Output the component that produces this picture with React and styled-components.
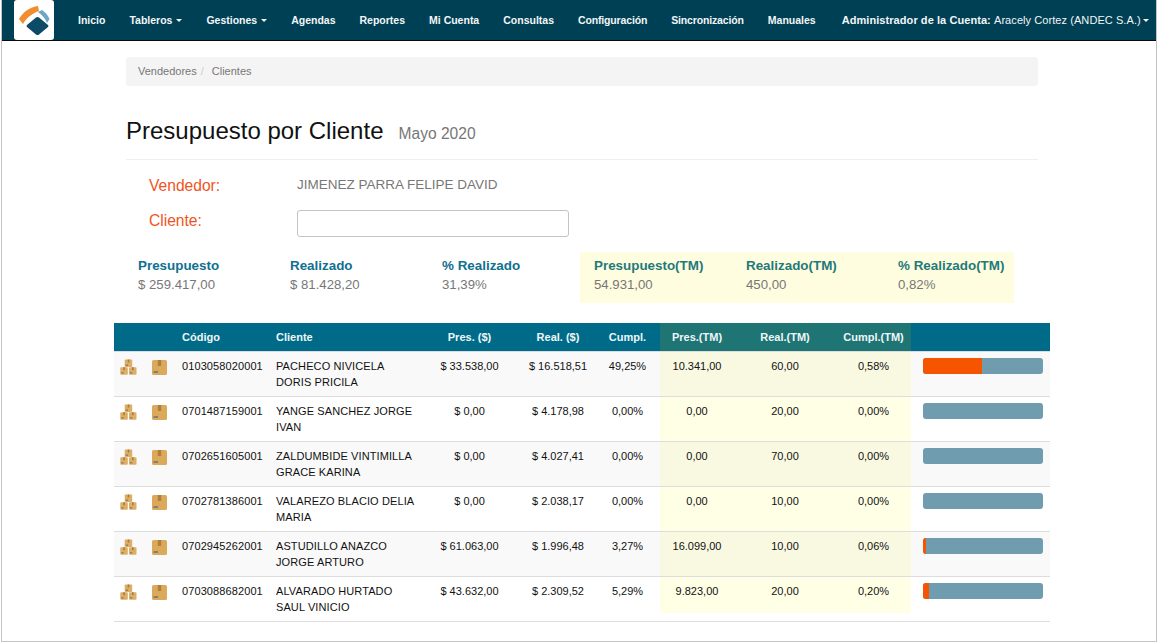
import React from 'react'
import styled, { createGlobalStyle } from 'styled-components'

const GlobalStyle = createGlobalStyle`
  html, body {
    margin: 0;
    background: white;
    font-family: "Liberation Sans", Arial, sans-serif;
  }
  * {
    box-sizing: border-box;
  }
`

const Frame = styled.div`
  width: 1156px;
  height: 642px;
  margin-left: 1px;
  border: 1px solid #c4c4c4;
  border-top: none;
  overflow: hidden;
`

const Navbar = styled.nav`
  display: flex;
  align-items: center;
  height: 41px;
  padding-left: 12px;
  background: #004055;
  border-bottom: 1px solid #0a0a0a;
`

const LogoBox = styled.div`
  width: 40px;
  height: 40px;
  margin-right: 24px;
  background: white;
  border-radius: 3px;
`

const NavItems = styled.div`
  display: flex;
  gap: 24px;
`

const NavItem = styled.a`
  font-size: 10.5px;
  font-weight: 700;
  color: #f2f6f7;
  white-space: nowrap;
  letter-spacing: ${p => p.$tight ? '-0.15px' : '0'};
`

const AccountItem = styled(NavItem)`
  margin-left: 2px;
  font-size: 11px;
  letter-spacing: 0.07px;
`

const AccountName = styled.span`
  font-weight: 400;
  letter-spacing: 0.07px;
`

const Caret = styled.span`
  display: inline-block;
  margin-left: 4px;
  vertical-align: 2px;
  border-top: 3px solid #f2f6f7;
  border-left: 3px solid transparent;
  border-right: 3px solid transparent;
`

const AccountCaret = styled(Caret)`
  margin-left: 2px;
`

const Container = styled.main`
  width: 936px;
  margin-left: 112px;
  padding-top: 16px;
`

const Section = styled.div`
  padding: 0 12px;
`

const Breadcrumb = styled.div`
  display: flex;
  align-items: center;
  height: 29px;
  padding: 0 12px 2px;
  font-size: 11px;
  color: #777;
  background: #f4f4f4;
  border-radius: 3px;
`

const Separator = styled.span`
  padding: 0 8px 0 4px;
  color: #ccc;
`

const PageHeader = styled.header`
  display: flex;
  align-items: baseline;
  gap: 15px;
  height: 74px;
  padding-top: 31px;
  border-bottom: 1px solid #eee;
`

const Title = styled.h1`
  margin: 0;
  font-size: 24px;
  line-height: 28px;
  font-weight: 400;
  color: #111;
`

const Period = styled.span`
  font-size: 15.6px;
  color: #777;
`

const FormRow = styled.div`
  display: grid;
  grid-template-columns: 148px 272px;
  align-items: start;
  height: ${p => p.$height}px;
  padding: ${p => p.$top || 0}px 0 0 23px;
`

const FieldLabel = styled.label`
  padding-top: ${p => p.$nudge || 0}px;
  font-size: 15.6px;
  line-height: 20px;
  color: #f0541e;
`

const FieldValue = styled.span`
  font-size: 13.5px;
  line-height: 18px;
  color: #777;
`

const TextInput = styled.input`
  width: 272px;
  height: 27px;
  background: white;
  border: 1px solid #c4c4c4;
  border-radius: 3px;
`

const Summary = styled.div`
  display: grid;
  grid-template-columns: repeat(3, 152px) 14px repeat(3, 152px);
  width: 888px;
  height: 51px;
  margin-top: 15px;
`

const SummaryHighlight = styled.div`
  grid-column: 4 / 8;
  display: grid;
  grid-template-columns: 14px repeat(3, 152px);
  width: 434px;
  margin-left: -2px;
  background: #fffde0;
`

const SummaryItem = styled.div`
  padding: 5px 0 0 12px;
  font-size: 13.2px;
  line-height: 18px;
  color: #777;
`

const HighlightItem = styled(SummaryItem)`
  padding-left: 0;
  &:first-child {
    grid-column: 2;
  }
`

const SummaryLabel = styled.div`
  margin-bottom: 1px;
  font-size: 13.4px;
  font-weight: 700;
  color: ${p => p.$tm ? '#1f7a7a' : '#10708f'};
`

const Table = styled.div`
  margin-top: 20px;
  font-size: 11px;
  color: #111;
  border-bottom: 1px solid #ddd;
`

const tracks = '31px 31px 94px 148px 103px 74px 65px 74px 102px 75px 139px'

const HeadRow = styled.div`
  display: grid;
  grid-template-columns: ${tracks};
  height: 28px;
  align-items: stretch;
  font-weight: 700;
  color: #eef6f8;
  background: #006b88;
`

const HeadCell = styled.div`
  display: flex;
  align-items: center;
  justify-content: ${p => p.$left ? 'flex-start' : 'center'};
  padding-left: ${p => p.$left ? '6px' : '0'};
  background: ${p => p.$tm ? '#1f7474' : 'transparent'};
`

const Row = styled.div`
  display: grid;
  grid-template-columns: ${tracks};
  height: 45px;
  background: ${p => p.$odd ? '#f9f9f9' : 'white'};
  border-top: 1px solid #ddd;
`

const IconCell = styled.div`
  padding: 7px 0 0 6px;
`

const Cell = styled.div`
  padding: 6px 0 0 ${p => p.$left ? '6px' : '0'};
  line-height: 16px;
  text-align: ${p => p.$left ? 'left' : 'center'};
  letter-spacing: ${p => p.$left ? '0.1px' : '0'};
`

const NameCell = styled(Cell)`
  padding-right: 4px;
`

const TmCell = styled(Cell)`
  background: ${p => p.$odd ? '#f9f9e2' : '#ffffe6'};
  height: ${p => p.$last ? '36px' : 'auto'};
`

const BarCell = styled.div`
  padding: 6px 0 0 12px;
`

const Bar = styled.div`
  width: 120px;
  height: 16px;
  background: #709caf;
  border-radius: 3px;
  overflow: hidden;
`

const BarFill = styled.div`
  height: 100%;
  background: #f55400;
`

function Logo () {
  return (
    <svg width="40" height="40" viewBox="0 0 40 40">
      <path d="M5 19 C9 12 16 7 24 6 L25 11 C19 13 13 17 9 24 Z" fill="#f28c2e"/>
      <path d="M24 12 L28 10 C31 12 34 15 35.5 19 L33 23 C31 18 28 15 24 12 Z" fill="#6ea6c4"/>
      <path d="M22 17.5 Q23.5 16.5 25 17.5 L34 25 Q35 26 34 27 L25 34.5 Q23.5 35.5 22 34.5 L13 27 Q12 26 13 25 Z" fill="#0d4a66"/>
    </svg>
  )
}

function SmallBox ({ x, y }) {
  return (
    <g transform={`translate(${x} ${y})`}>
      <rect width="7.5" height="7.5" rx="0.8" fill="#dcae66"/>
      <rect x="3" width="1.6" height="3" fill="#a97c3c"/>
      <rect x="1" y="5" width="2.4" height="1.3" fill="#8f7a5a"/>
    </g>
  )
}

function BoxesIcon () {
  return (
    <svg width="17" height="16" viewBox="0 0 17 16">
      <SmallBox x="4.7" y="0.5"/>
      <SmallBox x="0.3" y="8.2"/>
      <SmallBox x="9" y="8.2"/>
    </svg>
  )
}

const BoxSvg = styled.svg`
  margin: 1px 0 0 1px;
`

function BoxIcon () {
  return (
    <BoxSvg width="15" height="15" viewBox="0 0 15 15">
      <rect x="0" y="0" width="15" height="15" rx="1.5" fill="#dba95c"/>
      <rect x="5.8" y="0" width="3.4" height="6" fill="#b27f3a"/>
      <rect x="1.5" y="11" width="4.5" height="2" fill="#85806f"/>
    </BoxSvg>
  )
}

const navLinks = [
  { label: 'Inicio' },
  { label: 'Tableros', dropdown: true },
  { label: 'Gestiones', dropdown: true },
  { label: 'Agendas' },
  { label: 'Reportes' },
  { label: 'Mi Cuenta' },
  { label: 'Consultas' },
  { label: 'Configuración', tight: true },
  { label: 'Sincronización', tight: true },
  { label: 'Manuales' }
]

const clients = [
  { code: '0103058020001', name: 'PACHECO NIVICELA DORIS PRICILA', pres: '$ 33.538,00', real: '$ 16.518,51', cumpl: '49,25%', presTm: '10.341,00', realTm: '60,00', cumplTm: '0,58%', bar: 49.25 },
  { code: '0701487159001', name: 'YANGE SANCHEZ JORGE IVAN', pres: '$ 0,00', real: '$ 4.178,98', cumpl: '0,00%', presTm: '0,00', realTm: '20,00', cumplTm: '0,00%', bar: 0 },
  { code: '0702651605001', name: 'ZALDUMBIDE VINTIMILLA GRACE KARINA', pres: '$ 0,00', real: '$ 4.027,41', cumpl: '0,00%', presTm: '0,00', realTm: '70,00', cumplTm: '0,00%', bar: 0 },
  { code: '0702781386001', name: 'VALAREZO BLACIO DELIA MARIA', pres: '$ 0,00', real: '$ 2.038,17', cumpl: '0,00%', presTm: '0,00', realTm: '10,00', cumplTm: '0,00%', bar: 0 },
  { code: '0702945262001', name: 'ASTUDILLO ANAZCO JORGE ARTURO', pres: '$ 61.063,00', real: '$ 1.996,48', cumpl: '3,27%', presTm: '16.099,00', realTm: '10,00', cumplTm: '0,06%', bar: 2.5 },
  { code: '0703088682001', name: 'ALVARADO HURTADO SAUL VINICIO', pres: '$ 43.632,00', real: '$ 2.309,52', cumpl: '5,29%', presTm: '9.823,00', realTm: '20,00', cumplTm: '0,20%', bar: 5 }
]

export default function App () {
  return (
    <>
      <GlobalStyle/>
      <Frame>
        <Navbar>
          <LogoBox><Logo/></LogoBox>
          <NavItems>
            {navLinks.map(link => (
              <NavItem key={link.label} $tight={link.tight}>
                {link.label}{link.dropdown && <Caret/>}
              </NavItem>
            ))}
            <AccountItem>
              Administrador de la Cuenta: <AccountName>Aracely Cortez (ANDEC S.A.)</AccountName><AccountCaret/>
            </AccountItem>
          </NavItems>
        </Navbar>
        <Container>
          <Section>
            <Breadcrumb>
              Vendedores<Separator>/</Separator>Clientes
            </Breadcrumb>
            <PageHeader>
              <Title>Presupuesto por Cliente</Title>
              <Period>Mayo 2020</Period>
            </PageHeader>
            <FormRow $height={50} $top={16}>
              <FieldLabel>Vendedor:</FieldLabel>
              <FieldValue>JIMENEZ PARRA FELIPE DAVID</FieldValue>
            </FormRow>
            <FormRow $height={27}>
              <FieldLabel $nudge={1}>Cliente:</FieldLabel>
              <TextInput/>
            </FormRow>
            <Summary>
              <SummaryItem>
                <SummaryLabel>Presupuesto</SummaryLabel>$ 259.417,00
              </SummaryItem>
              <SummaryItem>
                <SummaryLabel>Realizado</SummaryLabel>$ 81.428,20
              </SummaryItem>
              <SummaryItem>
                <SummaryLabel>% Realizado</SummaryLabel>31,39%
              </SummaryItem>
              <SummaryHighlight>
                <HighlightItem>
                  <SummaryLabel $tm>Presupuesto(TM)</SummaryLabel>54.931,00
                </HighlightItem>
                <HighlightItem>
                  <SummaryLabel $tm>Realizado(TM)</SummaryLabel>450,00
                </HighlightItem>
                <HighlightItem>
                  <SummaryLabel $tm>% Realizado(TM)</SummaryLabel>0,82%
                </HighlightItem>
              </SummaryHighlight>
            </Summary>
          </Section>
          <Table>
            <HeadRow>
              <HeadCell/>
              <HeadCell/>
              <HeadCell $left>Código</HeadCell>
              <HeadCell $left>Cliente</HeadCell>
              <HeadCell>Pres. ($)</HeadCell>
              <HeadCell>Real. ($)</HeadCell>
              <HeadCell>Cumpl.</HeadCell>
              <HeadCell $tm>Pres.(TM)</HeadCell>
              <HeadCell $tm>Real.(TM)</HeadCell>
              <HeadCell $tm>Cumpl.(TM)</HeadCell>
              <HeadCell/>
            </HeadRow>
            {clients.map((client, i) => {
              const odd = i % 2 === 0
              const last = i === clients.length - 1
              return (
                <Row key={client.code} $odd={odd}>
                  <IconCell><BoxesIcon/></IconCell>
                  <IconCell><BoxIcon/></IconCell>
                  <Cell $left>{client.code}</Cell>
                  <NameCell $left>{client.name}</NameCell>
                  <Cell>{client.pres}</Cell>
                  <Cell>{client.real}</Cell>
                  <Cell>{client.cumpl}</Cell>
                  <TmCell $odd={odd} $last={last}>{client.presTm}</TmCell>
                  <TmCell $odd={odd} $last={last}>{client.realTm}</TmCell>
                  <TmCell $odd={odd} $last={last}>{client.cumplTm}</TmCell>
                  <BarCell>
                    <Bar><BarFill style={{ width: `${client.bar}%` }}/></Bar>
                  </BarCell>
                </Row>
              )
            })}
          </Table>
        </Container>
      </Frame>
    </>
  )
}
